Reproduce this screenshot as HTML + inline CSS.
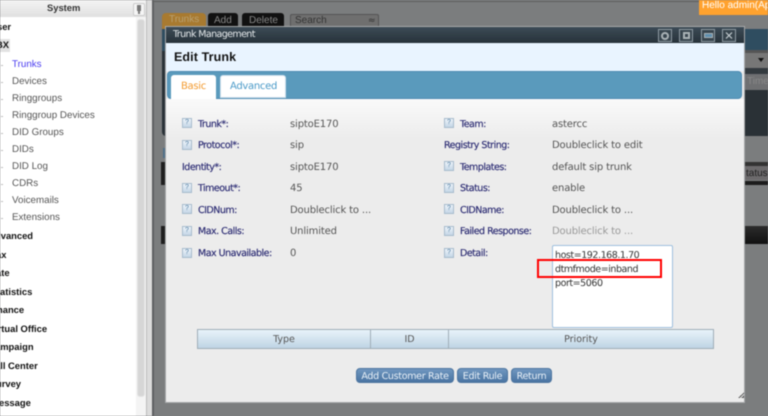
<!DOCTYPE html>
<html><head><meta charset="utf-8"><style>
html,body{margin:0;padding:0}
body{width:768px;height:416px;overflow:hidden;position:relative;background:#7b7d7e;font-family:"DejaVu Sans","Liberation Sans",sans-serif;text-rendering:geometricPrecision}
#w{position:absolute;left:0;top:0;width:768px;height:416px;overflow:hidden;filter:blur(.4px)}
#w div{position:absolute;white-space:nowrap}
.s{font:9.8px/14px "Liberation Sans",sans-serif;color:#555}
.h{font:bold 9.4px/14px "Liberation Sans",sans-serif;color:#111}
.d{width:2px;height:1px;background:#bbb;left:1px}
.l{font:9.5px/14px "DejaVu Sans",sans-serif;color:#2a2a72;letter-spacing:-.5px;-webkit-text-stroke:.15px #2a2a72}
.v{font:10px/14px "DejaVu Sans",sans-serif;color:#555;letter-spacing:-.15px}
.t{font:9.5px/14px "DejaVu Sans",sans-serif;color:#333;letter-spacing:-.45px}
.q{width:8px;height:8px;background:linear-gradient(#eef4fa,#c4d6e6);border:1px solid #a8bccd;font:7px/8px "Liberation Sans",sans-serif;color:#4a7aa0;text-align:center;box-sizing:content-box}
.b{height:13px;top:368px;background:linear-gradient(#7097bf,#4a74a2);border:1px solid #4d75a0;border-radius:4px;color:#e8f0f8;font:9.5px/16px "DejaVu Sans",sans-serif;text-align:center;letter-spacing:-.3px}
.c{top:329px;height:18px;background:linear-gradient(#e8f3fa,#bfd4e4);border:1px solid #a0aeb8;border-right:none;font:9.5px/19px "DejaVu Sans",sans-serif;color:#555;text-align:center;box-sizing:content-box}
.i{top:29px;width:12px;height:11px;border:1px solid #8f9ba3;background:#38454e}
</style></head><body><div id="w">
<!-- sidebar -->
<div style="left:0;top:0;width:136px;height:416px;background:#fff"></div>
<div style="left:0;top:0;width:146px;height:17px;background:linear-gradient(#f4f4f4,#e0e0e0)"></div>
<div class="h" style="left:47px;top:1px;color:#333">System</div>
<div style="left:133px;top:3px;width:10px;height:11px;background:#f5f5f5;border:1px solid #ccc;border-radius:2px"></div>
<div style="left:137px;top:5px;width:4px;height:6px;background:#777"></div>
<div style="left:138px;top:11px;width:2px;height:3px;background:#777"></div>
<div style="left:136px;top:17px;width:10px;height:399px;background:#f4f4f4"></div>
<div style="left:137px;top:19px;width:8px;height:378px;background:#d6d6d6;border-radius:3px;border:1px solid #e4e4e4;box-sizing:border-box"></div>
<div style="left:146px;top:0;width:6px;height:416px;background:#dcdcdc;border-left:1px solid #bbb;box-sizing:border-box"></div>
<div style="left:152px;top:0;width:2px;height:416px;background:#5f6162"></div>
<div class="h" style="left:-3px;top:20px">ser</div>
<div style="left:0;top:39px;width:10px;height:13px;background:#e2e2e2"></div>
<div class="h" style="left:-4px;top:38px">BX</div>
<div class="d" style="top:65px"></div><div class="s" style="left:12px;top:58px;color:#4a3cf0">Trunks</div>
<div class="d" style="top:82px"></div><div class="s" style="left:12px;top:75px">Devices</div>
<div class="d" style="top:99px"></div><div class="s" style="left:12px;top:92px">Ringgroups</div>
<div class="d" style="top:116px"></div><div class="s" style="left:12px;top:109px">Ringgroup Devices</div>
<div class="d" style="top:133px"></div><div class="s" style="left:12px;top:126px">DID Groups</div>
<div class="d" style="top:150px"></div><div class="s" style="left:12px;top:143px">DIDs</div>
<div class="d" style="top:167px"></div><div class="s" style="left:12px;top:160px">DID Log</div>
<div class="d" style="top:184px"></div><div class="s" style="left:12px;top:177px">CDRs</div>
<div class="d" style="top:201px"></div><div class="s" style="left:12px;top:194px">Voicemails</div>
<div class="d" style="top:218px"></div><div class="s" style="left:12px;top:211px">Extensions</div>
<div class="h" style="left:-5px;top:229px">dvanced</div>
<div class="h" style="left:-4px;top:248px">ax</div>
<div class="h" style="left:-4px;top:266px">ate</div>
<div class="h" style="left:0;top:285px">atistics</div>
<div class="h" style="left:-3px;top:303px">nance</div>
<div class="h" style="left:-5px;top:322px">irtual Office</div>
<div class="h" style="left:-5px;top:340px">ampaign</div>
<div class="h" style="left:-5px;top:359px">all Center</div>
<div class="h" style="left:-4px;top:377px">urvey</div>
<div class="h" style="left:-1px;top:396px">essage</div>
<!-- background app -->
<div style="left:154px;top:1px;width:614px;height:1px;background:#5e5e5e"></div>
<div style="left:162px;top:13px;width:44px;height:20px;background:#a87a30;border-radius:4px 4px 0 0"></div>
<div style="left:169px;top:13px;font:10px/14px 'Liberation Sans',sans-serif;color:#b8a070">Trunks</div>
<div style="left:208px;top:13px;width:30px;height:14px;background:#111;border-radius:3px 3px 0 0"></div>
<div style="left:214px;top:14px;font:10px/14px 'Liberation Sans',sans-serif;color:#888">Add</div>
<div style="left:242px;top:13px;width:42px;height:14px;background:#111;border-radius:3px 3px 0 0"></div>
<div style="left:249px;top:14px;font:10px/14px 'Liberation Sans',sans-serif;color:#888">Delete</div>
<div style="left:290px;top:14px;width:87px;height:13px;background:#6f6f6f;border:1px solid #555;border-radius:2px"></div>
<div style="left:295px;top:14px;font:10px/14px 'Liberation Sans',sans-serif;color:#333">Search</div>
<div style="left:368px;top:14px;font:9px/14px 'DejaVu Sans',sans-serif;color:#333">≈</div>
<div style="left:162px;top:29px;width:6px;height:107px;background:#2a3238;border-radius:0 0 0 4px"></div>
<div style="left:162px;top:29px;width:6px;height:22px;background:#2f4d60"></div>
<div style="left:163px;top:148px;width:3px;height:10px;background:#4f6f88"></div>
<div style="left:161px;top:162px;width:5px;height:23px;background:#1f1f1f"></div>
<div style="left:161px;top:226px;width:5px;height:18px;background:#1f1f1f"></div>
<!-- right side behind -->
<div style="left:745px;top:29px;width:23px;height:21px;background:#2f4d60"></div>
<div style="left:745px;top:50px;width:23px;height:3px;background:#555"></div>
<div style="left:745px;top:53px;width:23px;height:15px;background:#777"></div>
<div style="left:758px;top:58px;width:0;height:0;border:3px solid transparent;border-top:4px solid #111"></div>
<div style="left:745px;top:68px;width:23px;height:6px;background:#333a3f"></div>
<div style="left:745px;top:74px;width:23px;height:16px;background:#6f7072"></div>
<div style="left:747px;top:75px;font:10px/14px 'Liberation Sans',sans-serif;color:#888">Time</div>
<div style="left:745px;top:90px;width:23px;height:46px;background:#2a3136"></div>
<div style="left:745px;top:162px;width:23px;height:4px;background:#333"></div>
<div style="left:745px;top:166px;width:23px;height:14px;background:#6c6a6c"></div>
<div style="left:746px;top:167px;font:10px/14px 'Liberation Sans',sans-serif;color:#222">tatus</div>
<div style="left:745px;top:181px;width:23px;height:4px;background:#1c1c1c"></div>
<div style="left:745px;top:226px;width:23px;height:18px;background:linear-gradient(#2c2c2c,#111)"></div>
<!-- hello -->
<div style="left:699px;top:0;width:69px;height:15px;background:#ffa22e"></div>
<div style="left:702px;top:-1px;font:10px/14px 'Liberation Sans',sans-serif;color:#fff">Hello admin(Ap</div>
<!-- modal -->
<div style="left:165px;top:26px;width:580px;height:377px;background:#ececec;border:1px solid #a6a8aa;box-sizing:border-box"></div>
<div style="left:166px;top:27px;width:578px;height:16px;background:linear-gradient(#3c4b56,#27323a)"></div>
<div style="left:173px;top:28px;font:9.5px/13px 'DejaVu Sans',sans-serif;color:#e4e8ea;letter-spacing:-.6px">Trunk Management</div>
<div class="i" style="left:658px"></div>
<div style="left:661px;top:32px;width:8px;height:8px;border:2px solid #aab2b6;border-radius:50%;box-sizing:border-box"></div>
<div class="i" style="left:679px"></div>
<div style="left:683px;top:32px;width:7px;height:7px;border:2px solid #aab2b6;box-sizing:border-box"></div>
<div class="i" style="left:701px"></div>
<div style="left:704px;top:33px;width:9px;height:5px;background:#5f8fae;border:1px solid #aab2b6;box-sizing:border-box"></div>
<div class="i" style="left:722px"></div>
<svg style="position:absolute;left:722px;top:29px" width="14" height="13"><path d="M4 3.5L10 9.5M10 3.5L4 9.5" stroke="#c4ccd0" stroke-width="1.2"/></svg>
<div style="left:166px;top:43px;width:578px;height:28px;background:#e9f4ff"></div>
<div style="left:174px;top:49px;font:bold 12.5px/16px 'Liberation Sans',sans-serif;color:#111;letter-spacing:.1px">Edit Trunk</div>
<div style="left:167px;top:71px;width:575px;height:28px;background:#5a9abc;border:1px solid #4d8bb2;border-radius:4px;box-sizing:border-box"></div>
<div style="left:171px;top:75px;width:45px;height:24px;background:#fff;border-radius:3px 3px 0 0"></div>
<div style="left:181px;top:80px;font:10px/14px 'DejaVu Sans',sans-serif;color:#f39a2e;letter-spacing:-.3px">Basic</div>
<div style="left:220px;top:75px;width:66px;height:23px;background:#fff;border:1px solid #cfe0ec;border-radius:3px 3px 0 0;box-sizing:border-box"></div>
<div style="left:230px;top:80px;font:10px/14px 'DejaVu Sans',sans-serif;color:#4a9ac8;letter-spacing:-.3px">Advanced</div>
<div style="left:166px;top:99px;width:578px;height:40px;background:linear-gradient(#fafafa,#ececec)"></div>
<!-- left col -->
<div class="q" style="left:182px;top:118px">?</div><div class="l" style="left:198px;top:118px">Trunk*:</div><div class="v" style="left:290px;top:118px">siptoE170</div>
<div class="q" style="left:182px;top:140px">?</div><div class="l" style="left:198px;top:139px">Protocol*:</div><div class="v" style="left:290px;top:139px">sip</div>
<div class="l" style="left:182px;top:161px">Identity*:</div><div class="v" style="left:290px;top:161px">siptoE170</div>
<div class="q" style="left:182px;top:183px">?</div><div class="l" style="left:198px;top:182px">Timeout*:</div><div class="v" style="left:290px;top:182px">45</div>
<div class="q" style="left:182px;top:204px">?</div><div class="l" style="left:198px;top:204px">CIDNum:</div><div class="v" style="left:290px;top:204px">Doubleclick to ...</div>
<div class="q" style="left:182px;top:226px">?</div><div class="l" style="left:198px;top:225px">Max. Calls:</div><div class="v" style="left:290px;top:225px">Unlimited</div>
<div class="q" style="left:182px;top:248px">?</div><div class="l" style="left:198px;top:247px">Max Unavailable:</div><div class="v" style="left:290px;top:247px">0</div>
<!-- right col -->
<div class="q" style="left:444px;top:118px">?</div><div class="l" style="left:460px;top:118px">Team:</div><div class="v" style="left:552px;top:118px">astercc</div>
<div class="l" style="left:444px;top:139px">Registry String:</div><div class="v" style="left:552px;top:139px">Doubleclick to edit</div>
<div class="q" style="left:444px;top:161px">?</div><div class="l" style="left:460px;top:161px">Templates:</div><div class="v" style="left:552px;top:161px">default sip trunk</div>
<div class="q" style="left:444px;top:183px">?</div><div class="l" style="left:460px;top:182px">Status:</div><div class="v" style="left:552px;top:182px">enable</div>
<div class="q" style="left:444px;top:204px">?</div><div class="l" style="left:460px;top:204px">CIDName:</div><div class="v" style="left:552px;top:204px">Doubleclick to ...</div>
<div class="q" style="left:444px;top:226px">?</div><div class="l" style="left:460px;top:225px">Failed Response:</div><div class="v" style="left:552px;top:225px;color:#999">Doubleclick to ...</div>
<div class="q" style="left:444px;top:248px">?</div><div class="l" style="left:460px;top:247px">Detail:</div>
<!-- textarea -->
<div style="left:552px;top:245px;width:121px;height:83px;background:#fff;border:1px solid #9fc0de;border-radius:2px;box-sizing:border-box"></div>
<div class="t" style="left:555px;top:249px">host=192.168.1.70</div>
<div class="t" style="left:555px;top:263px">dtmfmode=inband</div>
<div style="left:555px;top:276px;width:46px;height:1px;border-top:1px dotted #e44"></div>
<div class="t" style="left:555px;top:277px">port=5060</div>
<div style="left:537px;top:259px;width:125px;height:19px;border:2px solid #f00;box-sizing:border-box"></div>
<!-- table -->
<div class="c" style="left:197px;width:172px">Type</div>
<div class="c" style="left:370px;width:77px">ID</div>
<div class="c" style="left:448px;width:264px;border-right:1px solid #a0aeb8">Priority</div>
<!-- buttons -->
<div class="b" style="left:356px;width:96px">Add Customer Rate</div>
<div class="b" style="left:457px;width:49px">Edit Rule</div>
<div class="b" style="left:511px;width:39px">Return</div>
<!-- grip -->
<div style="left:738px;top:392px;width:6px;height:6px;background:linear-gradient(135deg,transparent 50%,#666 50%,#666 65%,transparent 65%,transparent 75%,#666 75%)"></div>
</div></body></html>
